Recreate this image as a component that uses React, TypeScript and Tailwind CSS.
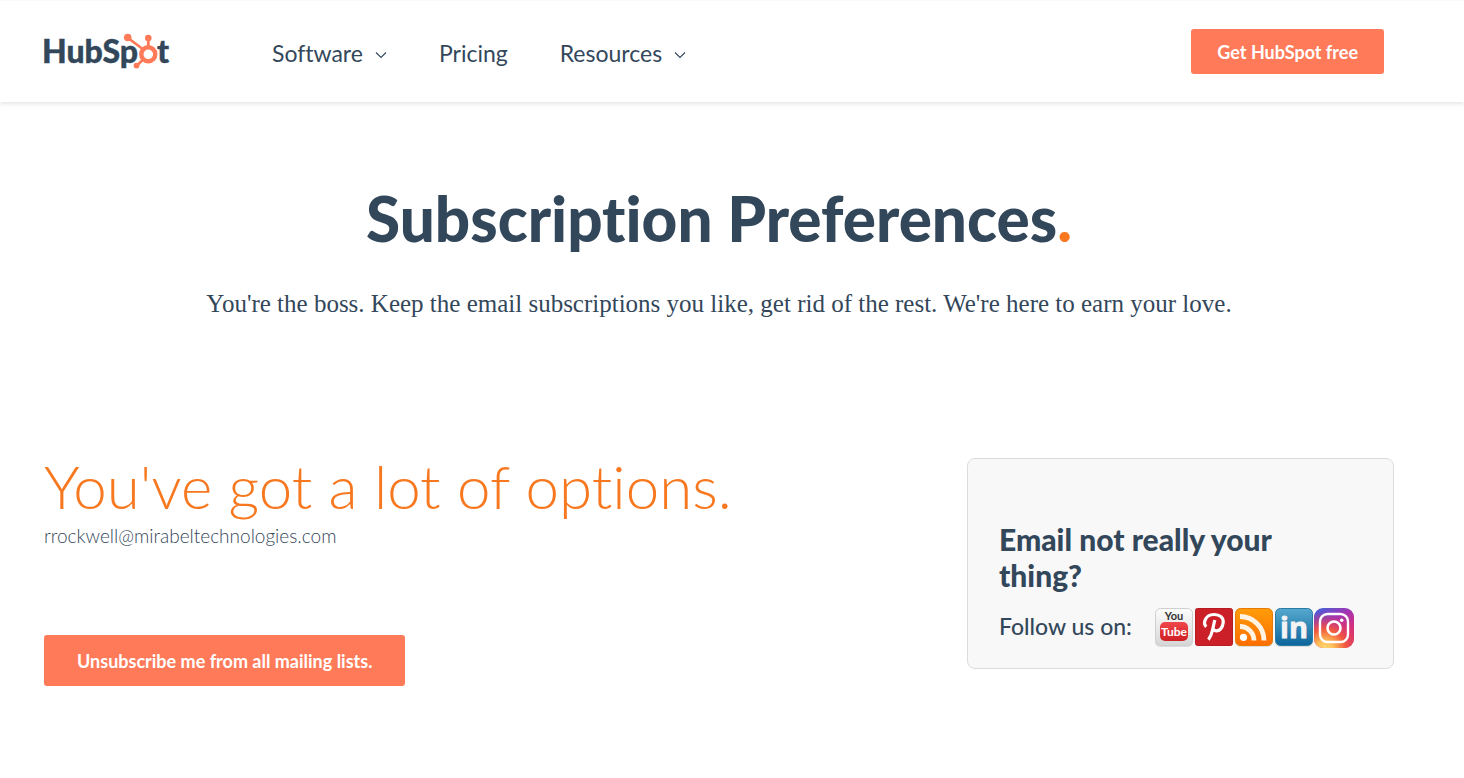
import React from 'react';

const navItems = [
  { label: 'Software', hasMenu: true },
  { label: 'Pricing', hasMenu: false },
  { label: 'Resources', hasMenu: true },
];

function HubSpotLogo() {
  return (
    <svg width="134" height="44" viewBox="-4 -2 134 44" role="img" aria-label="HubSpot" className="-ml-1 overflow-visible font-['Lato',sans-serif] font-black">
      <g fontSize="32" fill="#33475b" stroke="#33475b" strokeWidth="0.4">
        <text x="-2" y="31">HubSp</text>
        <text x="113" y="31">t</text>
      </g>
      <g fill="#ff7a59" stroke="#ff7a59">
        <path d="M84 6L100 18M104.3 6V15M93 33.5L99.5 27" fill="none" strokeWidth="2.8" />
        <circle cx="104.3" cy="22.3" r="7" fill="none" strokeWidth="4.4" />
        <circle cx="83.7" cy="5.5" r="3.8" stroke="none" />
        <circle cx="104.3" cy="6" r="3.3" stroke="none" />
        <circle cx="92.5" cy="33.6" r="2.9" stroke="none" />
      </g>
    </svg>
  );
}

function Chevron() {
  return (
    <svg width="12" height="8" viewBox="0 0 12 8" fill="none" stroke="#33475b" strokeWidth="1.1" className="mt-1">
      <path d="M1 1.5L6 6.5L11 1.5" />
    </svg>
  );
}

function YouTubeIcon() {
  return (
    <svg width="38" height="40" viewBox="0 0 38 40">
      <defs>
        <linearGradient id="yt-tile" x1="0" y1="0" x2="0" y2="1">
          <stop offset="0" stopColor="#fdfdfd" />
          <stop offset="1" stopColor="#d6d6d6" />
        </linearGradient>
        <linearGradient id="yt-tube" x1="0" y1="0" x2="0" y2="1">
          <stop offset="0" stopColor="#f0474a" />
          <stop offset="1" stopColor="#cf2024" />
        </linearGradient>
      </defs>
      <rect x="0" y="2" width="38" height="37" rx="5" fill="#000" opacity="0.1" />
      <rect x="0.5" y="0.5" width="37" height="37" rx="5" fill="url(#yt-tile)" stroke="#cfcfcf" />
      <rect x="5" y="14" width="28" height="19" rx="5" fill="url(#yt-tube)" />
      <g className="font-['Lato',sans-serif] font-bold" textAnchor="middle">
        <text x="19" y="12" fontSize="11" fill="#333">You</text>
        <text x="19" y="28" fontSize="12" fill="#fff">Tube</text>
      </g>
    </svg>
  );
}

function PinterestIcon() {
  return (
    <svg width="38" height="40" viewBox="0 0 38 40">
      <rect x="0.5" y="0.5" width="37" height="37" rx="2" fill="#cb2027" stroke="#b51b21" />
      <path
        d="M11.3 18.8C7.6 15.4 10 6.8 18.8 6.5C25 6.3 28.6 9.8 28.2 14.6C27.7 20 24.4 23 21.2 22.8C19 22.6 17.9 21.2 18.2 19.4M19.8 12L17.4 22.5C16.6 26 15.6 29 13.4 31.6"
        fill="none" stroke="#fff" strokeWidth="3.2" strokeLinejoin="round"
      />
    </svg>
  );
}

function RssIcon() {
  return (
    <svg width="38" height="40" viewBox="0 0 38 40">
      <defs>
        <linearGradient id="rss-tile" x1="0" y1="0" x2="0" y2="1">
          <stop offset="0" stopColor="#ff9d0a" />
          <stop offset="1" stopColor="#ff6d00" />
        </linearGradient>
      </defs>
      <rect x="0" y="2" width="38" height="37" rx="5" fill="#000" opacity="0.1" />
      <rect x="0.5" y="0.5" width="37" height="37" rx="5" fill="url(#rss-tile)" stroke="#e87904" />
      <g fill="none" stroke="#fff3e4" strokeWidth="4.8">
        <path d="M5 18.5A14 14 0 0 1 19 32.5" />
        <path d="M5 8.5A24 24 0 0 1 29 32.5" />
      </g>
      <circle cx="8.5" cy="29.3" r="3.6" fill="#fff" />
    </svg>
  );
}

function LinkedInIcon() {
  return (
    <svg width="38" height="40" viewBox="0 0 38 40" className="overflow-visible">
      <defs>
        <linearGradient id="in-tile" x1="0" y1="0" x2="0" y2="1">
          <stop offset="0" stopColor="#56a9cf" />
          <stop offset="1" stopColor="#0c659b" />
        </linearGradient>
      </defs>
      <rect x="0" y="2" width="38" height="37" rx="5" fill="#000" opacity="0.1" />
      <rect x="0.5" y="0.5" width="37" height="37" rx="5" fill="url(#in-tile)" stroke="#2c7ba5" />
      <text x="19" y="30" fontSize="29" textAnchor="middle" fill="#f4f4f4" stroke="#f4f4f4" strokeWidth="0.8" className="font-['Open_Sans',sans-serif] font-bold">in</text>
    </svg>
  );
}

function InstagramIcon() {
  return (
    <svg width="40" height="40" viewBox="0 0 40 40">
      <defs>
        <linearGradient id="ig-base" x1="0.2" y1="0" x2="0.8" y2="1">
          <stop offset="0" stopColor="#4f5bd5" />
          <stop offset="0.35" stopColor="#a333b2" />
          <stop offset="0.7" stopColor="#d92f7a" />
          <stop offset="1" stopColor="#e0395f" />
        </linearGradient>
        <radialGradient id="ig-glow" cx="0.27" cy="1.05" r="0.95">
          <stop offset="0" stopColor="#ffdc7d" />
          <stop offset="0.25" stopColor="#fdbb55" />
          <stop offset="0.55" stopColor="#f2593f" />
          <stop offset="1" stopColor="#d62e78" stopOpacity="0" />
        </radialGradient>
      </defs>
      <rect width="40" height="40" rx="9" fill="url(#ig-base)" />
      <rect width="40" height="40" rx="9" fill="url(#ig-glow)" />
      <rect x="6" y="6" width="28" height="28" rx="7.5" fill="none" stroke="#fff" strokeWidth="2.4" />
      <circle cx="20" cy="20" r="6.5" fill="none" stroke="#fff" strokeWidth="2.6" />
      <circle cx="27.7" cy="12.3" r="1.8" fill="#fff" />
    </svg>
  );
}

const socialLinks = [
  { name: 'YouTube', Icon: YouTubeIcon },
  { name: 'Pinterest', Icon: PinterestIcon },
  { name: 'RSS', Icon: RssIcon },
  { name: 'LinkedIn', Icon: LinkedInIcon },
];

export default function App() {
  return (
    <div className="min-h-screen bg-white text-[#33475b] font-['Lato',sans-serif] [font-variant-ligatures:none]">
      <header className="flex items-center h-[102px] pl-11 pr-20 border-t border-gray-50 shadow-[0_2px_4px_rgba(51,71,91,0.14)]">
        <a href="#" className="shrink-0">
          <HubSpotLogo />
        </a>
        <nav className="ml-[98px] flex items-center gap-[52px] mt-[2px]">
          {navItems.map((item) =>
            item.hasMenu ? (
              <button key={item.label} type="button" className="flex items-center gap-3 text-[23px] leading-8">
                {item.label}
                <Chevron />
              </button>
            ) : (
              <a key={item.label} href="#" className="text-[23px] leading-8">
                {item.label}
              </a>
            )
          )}
        </nav>
        <button type="button" className="ml-auto h-[45px] px-[26px] rounded-[3px] bg-[#ff7a59] text-white text-lg font-bold">
          Get HubSpot free
        </button>
      </header>

      <main className="pl-11 pr-[70px]">
        <section className="pt-20 text-center">
          <h1 className="text-[62px] leading-[72px] font-black">
            Subscription Preferences<span className="text-[#f87820]">.</span>
          </h1>
          <p className="mt-8 text-[25px] leading-9 font-['Liberation_Serif',serif]">
            You're the boss. Keep the email subscriptions you like, get rid of the rest. We're here to earn your love.
          </p>
        </section>

        <div className="mt-[136px] flex items-start justify-between gap-8">
          <section>
            <h2 className="text-[60px] leading-[56px] font-light text-[#f87820]">You've got a lot of options.</h2>
            <p className="mt-2 text-[19px] leading-7 font-light">rrockwell@mirabeltechnologies.com</p>
            <button type="button" className="mt-[85px] h-[51px] px-[33px] rounded-[3px] bg-[#ff7a59] text-white text-lg font-bold">
              Unsubscribe me from all mailing lists.
            </button>
          </section>

          <aside className="w-[427px] shrink-0 rounded-lg border border-[#dcdcdc] bg-[#f8f8f8] pt-[62px] px-[31px] pb-5">
            <h3 className="pr-10 text-[30px] leading-9 font-black">Email not really your thing?</h3>
            <div className="mt-[15px] flex items-start justify-between pr-2">
              <span className="text-[23px] leading-9 font-medium">Follow us on:</span>
              <div className="flex gap-[2px]">
                {socialLinks.map(({ name, Icon }) => (
                  <a key={name} href="#" aria-label={name}>
                    <Icon />
                  </a>
                ))}
                <a href="#" aria-label="Instagram" className="-ml-px">
                  <InstagramIcon />
                </a>
              </div>
            </div>
          </aside>
        </div>
      </main>
    </div>
  );
}
